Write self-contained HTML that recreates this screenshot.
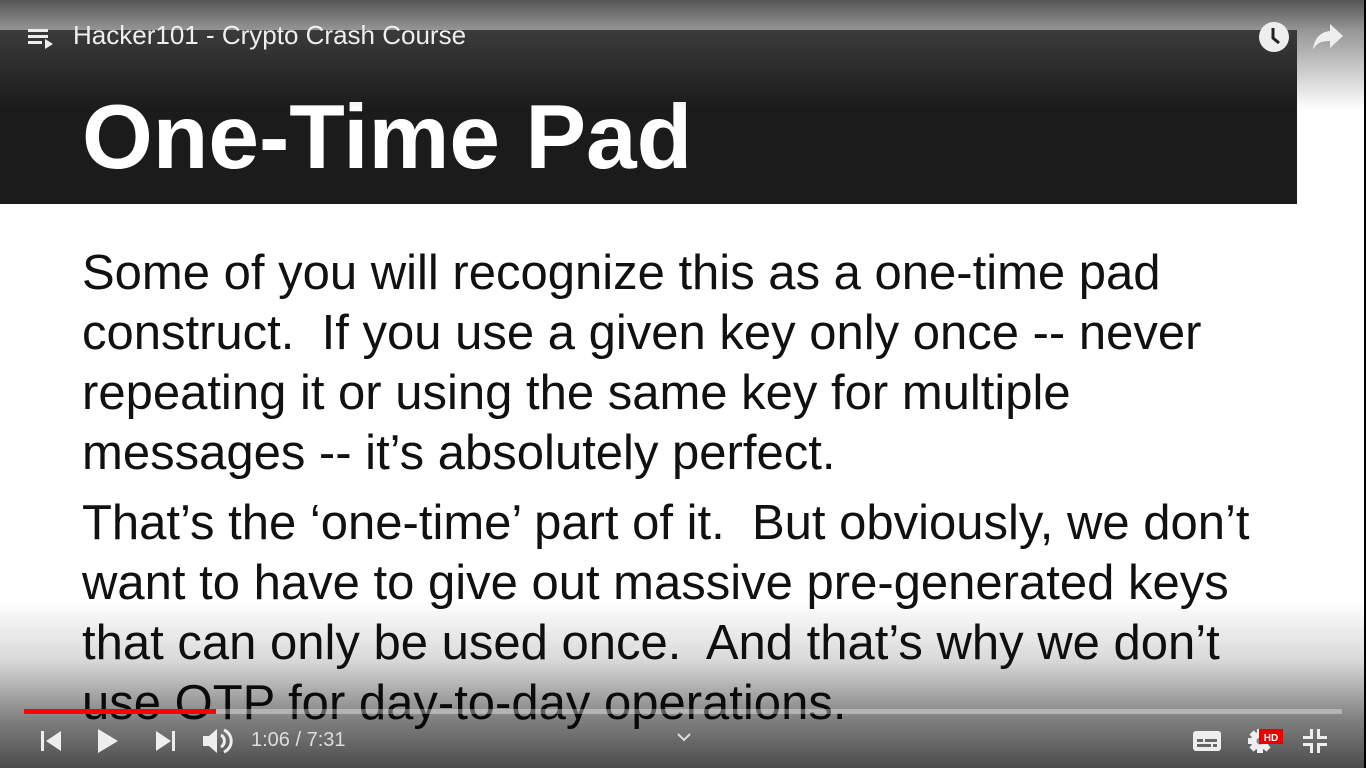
<!DOCTYPE html>
<html><head><meta charset="utf-8"><style>
html,body{margin:0;padding:0;width:1366px;height:768px;overflow:hidden;background:#fff;font-family:"Liberation Sans",Arial,sans-serif}
.band{position:absolute;left:0;top:30px;width:1297px;height:174px;background:#1b1b1b}
.title{position:absolute;left:82px;top:83px;font-size:91px;font-weight:bold;color:#fff;line-height:110px;white-space:pre}
.l{position:absolute;left:82px;font-size:49px;color:#111;white-space:pre;line-height:60px}
.topg{position:absolute;left:0;top:0;width:1366px;height:110px;background:linear-gradient(#555 0,rgba(80,80,80,.6) 30px,rgba(0,0,0,0) 110px)}
.botg{position:absolute;left:0;top:600px;width:1366px;height:168px;background:linear-gradient(rgba(0,0,0,0),rgba(0,0,0,.15) 60px,rgba(0,0,0,.5) 120px,rgba(0,0,0,.7))}
.edge{position:absolute;right:0;top:0;width:2px;height:768px;background:#000}
.hd{position:absolute;left:73px;top:20px;font-size:26px;color:#eee;white-space:pre}
.time{position:absolute;left:251px;top:729px;font-size:20px;color:#ddd}
</style></head><body>
<div class="band"></div>
<div class="title">One-Time Pad</div>
<div class="l" style="top:243px">Some of you will recognize this as a one-time pad</div>
<div class="l" style="top:303px">construct.  If you use a given key only once -- never</div>
<div class="l" style="top:363px">repeating it or using the same key for multiple</div>
<div class="l" style="top:423px">messages -- it’s absolutely perfect.</div>
<div class="l" style="top:493px">That’s the ‘one-time’ part of it.  But obviously, we don’t</div>
<div class="l" style="top:553px">want to have to give out massive pre-generated keys</div>
<div class="l" style="top:613px">that can only be used once.  And that’s why we don’t</div>
<div class="l" style="top:673px">use OTP for day-to-day operations.</div>
<div class="topg"></div>
<div class="botg"></div>
<div class="edge"></div>
<svg style="position:absolute;left:28px;top:27px" width="28" height="24"><g fill="#eee"><rect x="0" y="2" width="20" height="3"/><rect x="0" y="8" width="20" height="3"/><rect x="0" y="14" width="14" height="3"/><path d="M17 12l8 5-8 5z"/></g></svg>
<div class="hd">Hacker101 - Crypto Crash Course</div>
<svg style="position:absolute;left:1258px;top:21px" width="32" height="32"><circle cx="16" cy="16" r="15" fill="#eee"/><path d="M15 7v10l6 5" stroke="#222" stroke-width="3" fill="none"/></svg>
<svg style="position:absolute;left:1312px;top:22px" width="32" height="28"><path d="M18 2l13 12-13 12v-7C8 19 4 22 1 28 2 18 7 10 18 9z" fill="#eee"/></svg>
<div style="position:absolute;left:24px;top:709px;width:1318px;height:5px;background:rgba(255,255,255,.35)"></div>
<div style="position:absolute;left:24px;top:709px;width:192px;height:5px;background:#f00"></div>
<svg style="position:absolute;left:40px;top:730px" width="24" height="22"><rect x="1" y="1" width="3" height="20" fill="#eee"/><path d="M21 1v20L6 11z" fill="#eee"/></svg>
<svg style="position:absolute;left:96px;top:728px" width="26" height="26"><path d="M2 1v24l20-12z" fill="#eee"/></svg>
<svg style="position:absolute;left:154px;top:730px" width="24" height="22"><path d="M2 1v20l15-10z" fill="#eee"/><rect x="18" y="1" width="3" height="20" fill="#eee"/></svg>
<svg style="position:absolute;left:202px;top:727px" width="32" height="28"><path d="M1 9h6l8-7v24l-8-7H1z" fill="#eee"/><path d="M19 8a7 7 0 0 1 0 12M22 3a12 12 0 0 1 0 22" stroke="#eee" stroke-width="3" fill="none"/></svg>
<div class="time">1:06 / 7:31</div>
<svg style="position:absolute;left:677px;top:733px" width="14" height="10"><path d="M1 1l6 6 6-6" stroke="#ddd" stroke-width="2" fill="none"/></svg>
<svg style="position:absolute;left:1192px;top:728px" width="30" height="26"><rect x="1" y="3" width="28" height="20" rx="3" fill="#eee"/><g fill="#666"><rect x="5" y="11" width="6" height="3"/><rect x="13" y="11" width="12" height="3"/><rect x="5" y="16" width="14" height="3"/><rect x="21" y="16" width="4" height="3"/></g></svg>
<svg style="position:absolute;left:1246px;top:726px" width="40" height="30"><g fill="#eee"><circle cx="14" cy="15" r="9"/><rect x="11" y="3" width="6" height="24"/><rect x="2" y="12" width="24" height="6"/><rect x="11" y="3" width="6" height="24" transform="rotate(45 14 15)"/><rect x="11" y="3" width="6" height="24" transform="rotate(-45 14 15)"/></g><circle cx="14" cy="15" r="3.5" fill="#888"/><rect x="13" y="3" width="24" height="15" fill="#e00"/><text x="25" y="15" font-size="10" font-weight="bold" fill="#fff" text-anchor="middle" font-family="Liberation Sans">HD</text></svg>
<svg style="position:absolute;left:1302px;top:728px" width="26" height="26"><g fill="#eee"><path d="M8 1h3v10H1V8h7z"/><path d="M15 1h3v7h7v3H15z"/><path d="M1 15h10v10H8v-7H1z"/><path d="M15 15h10v3h-7v7h-3z"/></g></svg>
</body></html>
